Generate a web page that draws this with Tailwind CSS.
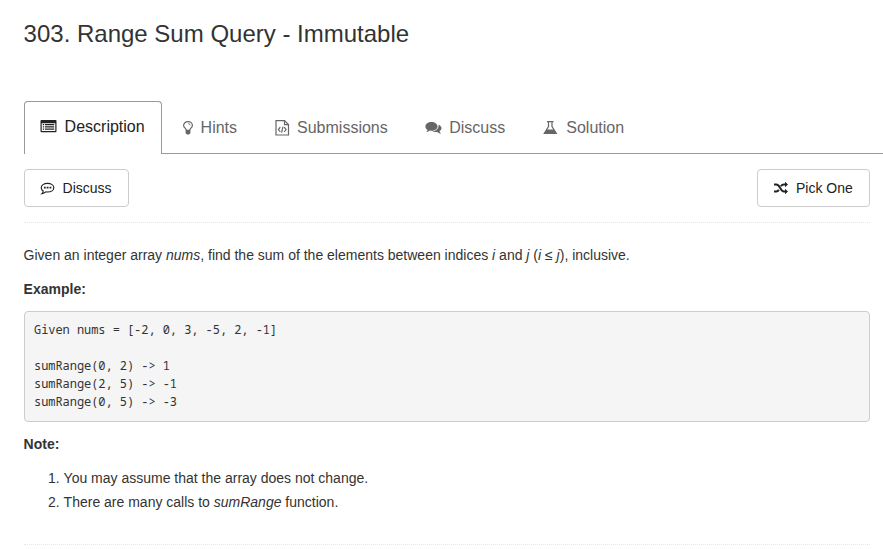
<!DOCTYPE html>
<html lang="en">
<head>
<meta charset="utf-8">
<title>Range Sum Query - Immutable</title>
<script src="https://cdn.jsdelivr.net/npm/@tailwindcss/browser@4"></script>
</head>
<body class="h-[549px] overflow-hidden bg-white pl-[23.6px] font-['Liberation_Sans',Arial,sans-serif] text-sm text-[#333]">
<h1 class="pt-[18px] text-2xl leading-8">303. Range Sum Query - Immutable</h1>

<nav class="mt-[51px] flex h-[53px] text-base text-[#666]">
  <a class="flex w-[138px] shrink-0 items-center rounded-t border border-b-0 border-[#999] pb-[2px] pl-[15px] text-[#222]">
    <svg class="mr-2 h-4 w-[17px]" viewBox="0 0 17 16" fill="currentColor"><path fill-rule="evenodd" d="M1.500 1h14q1 0 1 1v10q0 1.300-1 1.300h-14q-1 0-1-1.300V2q0-1 1-1zM1.700 4.200v7.500q0 .4.4.4h12.800q.4 0 .4-.4V4.200z"/><path d="M2.800 5h1.400v1.200H2.800zM5 5h9.200v1.200H5zM2.800 7.300h1.400v1.200H2.800zM5 7.300h9.200v1.200H5zM2.800 9.600h1.400v1.200H2.800zM5 9.600h9.200v1.200H5z"/></svg>
    Description
  </a>
  <div class="flex flex-1 items-center border-b border-[#999] pt-[2px] pl-[20px]">
    <a class="flex items-center">
      <svg class="mr-[7px] h-[15px] w-3" viewBox="0 0 12 15" fill="none" stroke="currentColor" stroke-width="1.200"><path d="M4.200 9C4 7 1.600 6.500 1.600 4.400a4.400 3.800 0 0 1 8.800 0C10.400 6.500 8 7 7.800 9"/><path d="M6 2.600q2 .1 2.200 1.800" stroke-width=".8"/><path d="M3.600 8.700h4.800v3.500L7 13.500H5l-1.400-1.300z" fill="currentColor" stroke="none"/></svg>
      Hints
    </a>
    <a class="ml-[38px] flex items-center">
      <svg class="mr-[7px] h-4 w-[15px]" viewBox="0 0 15 16" fill="none" stroke="currentColor" stroke-width="1.200"><path d="M1 .6h8.500l4 4v10.400H1z"/><path d="M9.500.6v4h4M5.300 7.200 3.400 9.600l1.900 2.400M9.200 7.200l1.900 2.400-1.900 2.400M8 6.600l-1.400 6"/></svg>
      Submissions
    </a>
    <a class="ml-[37.500px] flex items-center">
      <svg class="mr-[7px] h-4 w-[17px]" viewBox="0 0 17 16" fill="currentColor"><path d="M6.500 2c3.300 0 6 1.900 6 4.400s-2.700 4.300-6 4.300l-1.400-.1c-1.100.8-2.400 1.300-4 1.300.8-.6 1.400-1.200 1.500-2C1.300 9.100.4 7.900.4 6.400.4 3.900 3.200 2 6.500 2z"/><path d="M13.600 4.800c1.700.7 2.900 1.900 2.900 3.400 0 1.200-.8 2.200-2 2.900.2.900.8 1.600 1.500 2.400-1.500 0-2.900-.6-3.900-1.500-2 .3-3.700 0-5-.9 3.900 0 6.800-2.200 6.500-6.300z"/></svg>
      Discuss
    </a>
    <a class="ml-[38px] flex items-center">
      <svg class="mr-2 h-4 w-[15px]" viewBox="0 0 15 16" fill="none" stroke="currentColor" stroke-width="1.200"><path d="M4 1.700h6.500M5.500 2v4.500l-4.200 7h12l-4.300-7V2"/><path d="M3.600 9.500h7.300l3 4.600H.7z" fill="currentColor" stroke="none"/></svg>
      Solution
    </a>
  </div>
</nav>

<main class="mr-[13px]">
  <div class="flex items-center justify-between border-b border-dotted border-[#e7e7e7] pt-[15px] pb-[15px]">
    <button class="flex h-[38px] w-[105px] items-center rounded border border-[#ccc] pl-[15px] text-[#222]">
      <svg class="mr-2 h-[14px] w-[15px]" viewBox="0 0 15 14" fill="none" stroke="currentColor" stroke-width="1.150"><path d="M7.500 2.400c3.600 0 6.300 1.900 6.300 4.300s-2.700 4.300-6.300 4.300l-1.600-.1c-1.100.9-2.500 1.500-3.900 1.700.8-.7 1.100-1.500 1.200-2.600C1.900 9.200 1.200 8.100 1.200 6.700c0-2.400 2.700-4.300 6.300-4.300z"/><path d="M3.900 5.800h1.800v1.800H3.900zM6.700 5.800h1.800v1.800H6.700zM9.500 5.800h1.800v1.800H9.500z" fill="currentColor" stroke="none"/></svg>
      Discuss
    </button>
    <button class="flex h-[38px] w-[113px] items-center rounded border border-[#ccc] pl-4 text-[#222]">
      <svg class="mr-2 h-[14px] w-[14px]" viewBox="0 0 14 14" fill="none" stroke="currentColor" stroke-width="2"><path d="M0 3.500h2.200C6.500 3.500 6 10.500 10 10.500h1.500M0 10.500h2.200q1.700 0 2.600-1.700M6.900 5.200Q8 3.500 10 3.500h1.500"/><path d="M11 .700 14 3.500 11 6.300zM11 7.700l3 2.800-3 2.800z" fill="currentColor" stroke="none"/></svg>
      Pick One
    </button>
  </div>

  <p class="mt-5 leading-6">Given an integer array <i>nums</i>, find the sum of the elements between indices <i>i</i> and <i>j</i> (<i>i ≤ j</i>), inclusive.</p>
  <p class="mt-[10px] leading-6 font-bold">Example:</p>
  <pre class="mt-[10px] h-[111px] rounded border border-[#ccc] bg-[#f5f5f5] px-[9.400px] pt-[9px] font-['Noto_Sans_Mono',monospace] text-[12px] leading-[18px] tracking-[-0.05px]">Given nums = [-2, 0, 3, -5, 2, -1]

sumRange(0, 2) -&gt; 1
sumRange(2, 5) -&gt; -1
sumRange(0, 5) -&gt; -3</pre>
  <p class="mt-[10px] leading-6 font-bold">Note:</p>
  <ol class="mt-[10px] list-decimal pl-10 leading-6">
    <li>You may assume that the array does not change.</li>
    <li>There are many calls to <i>sumRange</i> function.</li>
  </ol>
  <div class="mt-[30px] border-t border-dotted border-[#e7e7e7]"></div>
</main>
</body>
</html>
